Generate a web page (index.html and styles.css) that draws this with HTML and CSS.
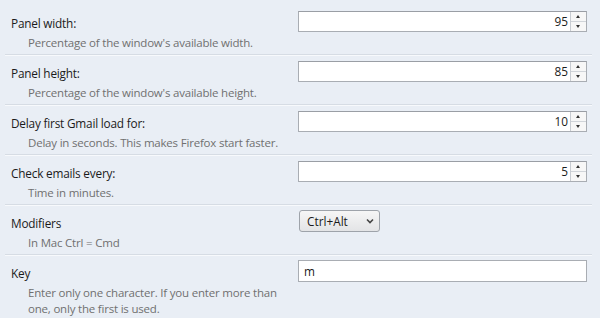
FILE: index.html
```html
<!DOCTYPE html>
<html>
<head>
<meta charset="utf-8">
<link rel="stylesheet" href="styles.css">
</head>
<body>
<div class="prefs">
  <div class="row">
    <div class="info">
      <div class="label">Panel width:</div>
      <div class="desc">Percentage of the window's available width.</div>
    </div>
    <div class="spin"><span class="val">95</span><span class="arrows"><span class="up"></span><span class="down"></span></span></div>
  </div>
  <div class="row">
    <div class="info">
      <div class="label">Panel height:</div>
      <div class="desc">Percentage of the window's available height.</div>
    </div>
    <div class="spin"><span class="val">85</span><span class="arrows"><span class="up"></span><span class="down"></span></span></div>
  </div>
  <div class="row">
    <div class="info">
      <div class="label">Delay first Gmail load for:</div>
      <div class="desc">Delay in seconds. This makes Firefox start faster.</div>
    </div>
    <div class="spin"><span class="val">10</span><span class="arrows"><span class="up"></span><span class="down"></span></span></div>
  </div>
  <div class="row">
    <div class="info">
      <div class="label">Check emails every:</div>
      <div class="desc">Time in minutes.</div>
    </div>
    <div class="spin"><span class="val">5</span><span class="arrows"><span class="up"></span><span class="down"></span></span></div>
  </div>
  <div class="row">
    <div class="info">
      <div class="label">Modifiers</div>
      <div class="desc">In Mac Ctrl = Cmd</div>
    </div>
    <div class="select"><span>Ctrl+Alt</span><svg class="chev" width="8" height="6" viewBox="0 0 8 6"><path d="M1 1.5 L4 4.5 L7 1.5" fill="none" stroke="#444" stroke-width="1.6"/></svg></div>
  </div>
  <div class="row last">
    <div class="info">
      <div class="label">Key</div>
      <div class="desc">Enter only one character. If you enter more than one, only the first is used.</div>
    </div>
    <div class="text">m</div>
  </div>
</div>
</body>
</html>
```
FILE: styles.css
```css
html, body {
  margin: 0;
  padding: 0;
  background: #e9eef5;
  font-family: "Open Sans", "Noto Sans", sans-serif;
  font-size: 12px;
  overflow: hidden;
}
.prefs {
  margin-left: 5px;
  width: 587px;
  padding-top: 5px;
}
.row {
  display: grid;
  grid-template-columns: 293px 289px;
  height: 49px;
  border-bottom: 1px solid #d6dce4;
  box-shadow: 0 1px 0 #f7f9fc;
}
.row.last {
  border-bottom: none;
  box-shadow: none;
  height: 70px;
}
.info {
  padding: 10px 0 0 6px;
}
.label {
  color: #1b1b1b;
  line-height: 16px;
  font-size: 11.8px;
  letter-spacing: -0.2px;
}
.desc {
  color: #707070;
  line-height: 16px;
  margin-top: 4px;
  padding-left: 17px;
  font-size: 11.5px;
  letter-spacing: -0.2px;
  width: 252px;
}
.spin {
  margin-top: 6px;
  height: 19px;
  border: 1px solid #a9adb3;
  border-top-color: #9a9ea5;
  background: #fff;
  display: flex;
  box-sizing: content-box;
}
.val {
  flex: 1;
  text-align: right;
  padding-right: 2px;
  line-height: 19px;
  color: #1b1b1b;
  font-size: 11.8px;
}
.arrows {
  width: 15px;
  border-left: 1px solid #c8ccd2;
  display: flex;
  flex-direction: column;
  background: #f7f7f7;
}
.up, .down {
  flex: 1;
  position: relative;
}
.up {
  border-bottom: 1px solid #d0d4d9;
}
.up::after, .down::after {
  content: "";
  position: absolute;
  left: 5px;
  width: 0;
  height: 0;
  border-left: 2.5px solid transparent;
  border-right: 2.5px solid transparent;
}
.up::after {
  top: 3px;
  border-bottom: 3px solid #333;
}
.down::after {
  top: 3px;
  border-top: 3px solid #333;
}
.select {
  margin-top: 5px;
  margin-left: 1px;
  height: 20px;
  border: 1px solid #9ea3aa;
  border-radius: 3px;
  background: linear-gradient(#f6f6f6, #e3e4e6);
  display: flex;
  align-items: center;
  justify-content: space-between;
  padding: 0 5px 0 7px;
  box-sizing: content-box;
  width: 67px;
  color: #1b1b1b;
  font-size: 11.8px;
}
.chev {
  display: block;
}
.text {
  margin-top: 5px;
  height: 20px;
  border: 1px solid #a9adb3;
  background: #fff;
  padding-left: 5px;
  line-height: 20px;
  color: #1b1b1b;
  font-size: 11.8px;
}
```
